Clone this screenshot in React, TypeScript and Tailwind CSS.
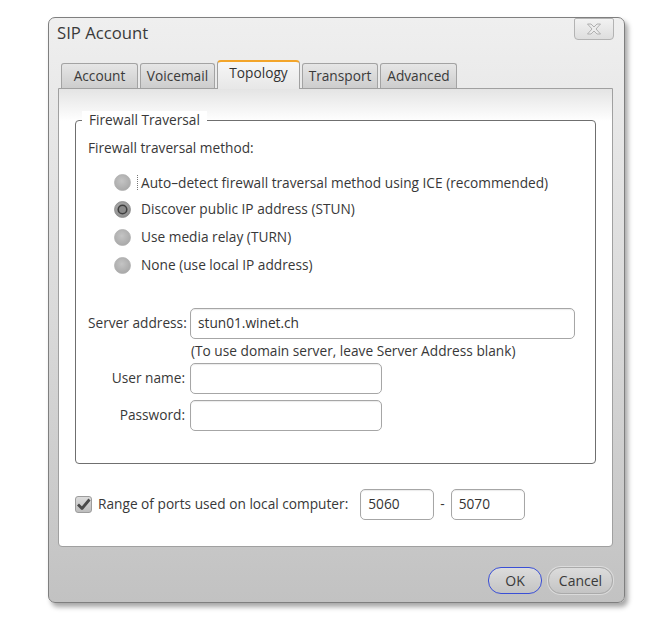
import React from 'react';

const FONT = { fontFamily: '"Open Sans", "Noto Sans", "Liberation Sans", sans-serif' };

function Radio({ checked }: { checked?: boolean }) {
  return (
    <svg width="17" height="17" viewBox="0 0 17 17" className="shrink-0">
      <defs>
        <radialGradient id={checked ? 'rg-on' : 'rg-off'} cx="45%" cy="40%" r="60%">
          <stop offset="0%" stopColor={checked ? '#b5b5b5' : '#c4c4c4'} />
          <stop offset="100%" stopColor={checked ? '#8e8e8e' : '#a9a9a9'} />
        </radialGradient>
      </defs>
      <circle cx="8.5" cy="8.5" r="8" fill={`url(#${checked ? 'rg-on' : 'rg-off'})`} stroke={checked ? '#8a8a8a' : '#b0b0b0'} strokeWidth="0.8" />
      {checked && <circle cx="8.5" cy="8.5" r="4.3" fill="#8a8a8a" stroke="#3f3f3f" strokeWidth="1.6" />}
    </svg>
  );
}

function CheckBox() {
  return (
    <div className="w-[17px] h-[17px] rounded-[3px] border border-[#9c9c9c] bg-gradient-to-b from-[#dcdcdc] to-[#bdbdbd] flex items-center justify-center">
      <svg width="15" height="15" viewBox="0 0 15 15">
        <path d="M2 7.5 L6 11.5 L13.5 2.5" fill="none" stroke="#4a4a4a" strokeWidth="2.8" strokeLinejoin="round" />
      </svg>
    </div>
  );
}

function Tab({ label, active, w }: { label: string; active?: boolean; w: string }) {
  if (active) {
    return (
      <div
        className={`${w} h-[29px] -mb-px relative z-10 rounded-t-[4px] border-x border-t-2 border-x-[#a0a0a0] border-t-[#f3a52a] bg-gradient-to-b from-[#f7f7f7] to-[#e7e7e7] flex items-center justify-center text-[13.7px] text-[#333] pb-[4px]`}
      >
        {label}
      </div>
    );
  }
  return (
    <div
      className={`${w} h-[25px] rounded-t-[3px] border-x border-t border-[#a3a3a3] bg-gradient-to-b from-[#e6e6e6] to-[#cdcdcd] flex items-center justify-center text-[13.7px] text-[#3a3a3a]`}
    >
      {label}
    </div>
  );
}

function TextBox({ w, value }: { w: string; value?: string }) {
  return (
    <div className={`${w} h-[31px] rounded-[5px] border border-[#a6a6a6] bg-white shadow-[inset_0_1px_1px_rgba(0,0,0,0.08)] flex items-center px-[7px] text-[13.7px] text-[#333]`}>
      {value}
    </div>
  );
}

export default function App() {
  return (
    <div className="min-h-screen bg-white pl-[48px] pt-[17px]" style={FONT}>
      <div className="w-[577px] h-[586px] rounded-[7px] border border-[#7f7f7f] bg-gradient-to-b from-[#efefef] via-[#dadada] to-[#c2c2c2] shadow-[3px_4px_5px_rgba(0,0,0,0.35)] flex flex-col">
        {/* title bar */}
        <div className="h-[42px] flex justify-between">
          <div className="pl-[8px] pt-[2px] text-[16.7px] text-[#3a3a3a]">SIP Account</div>
          <div className="mr-[10px] w-[40px] h-[22px] rounded-b-[4px] rounded-t-[2px] border border-[#b3b3b3] bg-gradient-to-b from-[#f2f2f2] to-[#dedede] flex items-center justify-center">
            <svg width="16" height="12" viewBox="0 0 16 12">
              <path
                d="M1.5 1 H5 L8 4 L11 1 H14.5 L10 6 L14.5 11 H11 L8 8 L5 11 H1.5 L6 6 Z"
                fill="#ececec"
                stroke="#a9a9a9"
                strokeWidth="0.9"
                strokeLinejoin="round"
              />
            </svg>
          </div>
        </div>

        {/* tabs */}
        <div className="h-[28px] flex items-end gap-[2px] pl-[12px]">
          <Tab label="Account" w="w-[77px]" />
          <Tab label="Voicemail" w="w-[75px]" />
          <Tab label="Topology" w="w-[83px]" active />
          <Tab label="Transport" w="w-[76px]" />
          <Tab label="Advanced" w="w-[77px]" />
        </div>

        {/* panel */}
        <div className="ml-[9px] mr-[11px] h-[459px] rounded-b-[4px] border border-[#a0a0a0] bg-gradient-to-b from-[#e4e4e4] via-white via-[7%] to-white flex flex-col">
          {/* group box */}
          <div className="relative ml-[16px] mr-[16px] mt-[31px] h-[344px] rounded-[4px] border border-[#6f6f6f] flex flex-col pl-[12px] text-[13.7px] text-[#383838]">
            <div className="absolute -top-[10px] left-[6px] bg-white px-[7px] leading-[18px]">Firewall Traversal</div>
            <div className="mt-[19px] leading-[16px]">Firewall traversal method:</div>

            <div className="mt-[13px] ml-[26px] flex flex-col">
              <div className="h-[27px] flex items-center gap-[10px]">
                <Radio />
                <span className="-ml-[4px] pl-[3px] border-l border-dotted border-[#777] leading-[15px]">Auto–detect firewall traversal method using ICE (recommended)</span>
              </div>
              <div className="h-[27px] flex items-center gap-[10px]">
                <Radio checked />
                <span>Discover public IP address (STUN)</span>
              </div>
              <div className="h-[28px] flex items-center gap-[10px]">
                <Radio />
                <span>Use media relay (TURN)</span>
              </div>
              <div className="h-[28px] flex items-center gap-[10px]">
                <Radio />
                <span>None (use local IP address)</span>
              </div>
            </div>

            <div className="mt-[29px] flex items-center gap-[5px]">
              <div className="w-[97px] text-right whitespace-nowrap">Server address:</div>
              <TextBox w="w-[385px]" value="stun01.winet.ch" />
            </div>
            <div className="ml-[103px] mt-[4px] leading-[16px]">(To use domain server, leave Server Address blank)</div>
            <div className="mt-[4px] flex items-center gap-[5px]">
              <div className="w-[97px] text-right">User name:</div>
              <TextBox w="w-[192px]" />
            </div>
            <div className="mt-[6px] flex items-center gap-[5px]">
              <div className="w-[97px] text-right">Password:</div>
              <TextBox w="w-[192px]" />
            </div>
          </div>

          {/* port range */}
          <div className="ml-[16px] mt-[25px] flex items-center text-[13.7px] text-[#383838]">
            <CheckBox />
            <span className="ml-[6px]">Range of ports used on local computer:</span>
            <div className="ml-[12px]">
              <TextBox w="w-[74px]" value="5060" />
            </div>
            <span className="mx-[6px]">-</span>
            <TextBox w="w-[74px]" value="5070" />
          </div>
        </div>

        {/* buttons */}
        <div className="flex justify-end gap-[6px] pt-[20px] pr-[11px]">
          <button className="w-[54px] h-[27px] rounded-[13px] border-[1.5px] border-[#3a4fd6] bg-gradient-to-b from-[#dcdcdc] to-[#c4c4c4] text-[14px] text-[#3a3a3a]">
            OK
          </button>
          <button className="w-[65px] h-[27px] rounded-[13px] border border-[#aaaaaa] bg-gradient-to-b from-[#dcdcdc] to-[#c4c4c4] text-[14px] text-[#3a3a3a] shadow-[0_0_0_1px_rgba(255,255,255,0.4)]">
            Cancel
          </button>
        </div>
      </div>
    </div>
  );
}
